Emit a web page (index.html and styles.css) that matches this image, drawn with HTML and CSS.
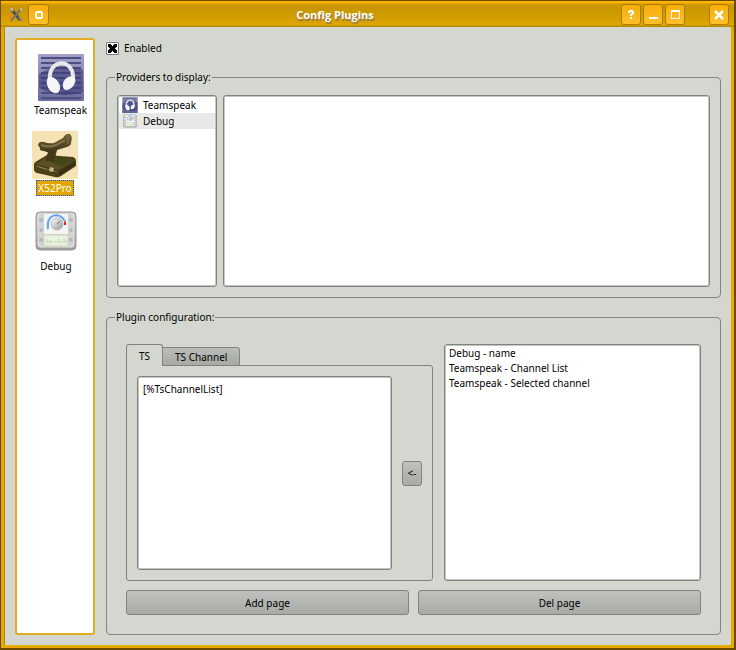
FILE: index.html
```html
<!DOCTYPE html>
<html lang="en">
<head>
    <meta charset="UTF-8">
    <meta name="viewport" content="width=device-width, initial-scale=1.0">
    <title>Config Plugins</title>
    <link rel="stylesheet" href="styles.css">
</head>
<body>

<!-- Shared icons -->
<svg class="defs" width="0" height="0" aria-hidden="true">
    <defs>
        <linearGradient id="tsBg" x1="0" y1="0" x2="0" y2="1">
            <stop offset="0" stop-color="#a2a2c8"/>
            <stop offset="1" stop-color="#6a6b9e"/>
        </linearGradient>
        <linearGradient id="metal" x1="0" y1="0" x2="0" y2="1">
            <stop offset="0" stop-color="#c8c8c8"/>
            <stop offset="1" stop-color="#9a9a9a"/>
        </linearGradient>
        <linearGradient id="knob" x1="0" y1="0" x2="1" y2="1">
            <stop offset="0" stop-color="#ffffff"/>
            <stop offset="1" stop-color="#8e9496"/>
        </linearGradient>
        <linearGradient id="grip" x1="0" y1="0" x2="0" y2="1">
            <stop offset="0" stop-color="#71633a"/>
            <stop offset="1" stop-color="#42391a"/>
        </linearGradient>
    </defs>
    <symbol id="icon-teamspeak" viewBox="0 0 46 47">
        <rect width="46" height="47" rx="1" fill="url(#tsBg)"/>
        <path d="M3 4h40M3 9h40M3 14h40M3 19h40M3 24h40M3 29h40M3 34h40M3 39h40M3 44h40" stroke="#4c4d80" stroke-width="2"/>
        <path d="M1 20Q22 7 45 16V38Q24 46 1 34Z" fill="#3c3d78" opacity=".6"/>
        <path d="M12 27C9 4 37 3 35 26" fill="none" stroke="#e9e9ec" stroke-width="4"/>
        <path d="M11 23C17 22 23 29 22 35C21 41 14 40 11 35C8 30 8 25 11 23Z" fill="#f6f6f6"/>
        <path d="M35 23C29 21 24 27 25 33C26 38 33 36 36 31C38 27 38 24 35 23Z" fill="#f6f6f6"/>
    </symbol>
    <symbol id="icon-debug" viewBox="0 0 48 48">
        <rect x="4" y="5" width="40" height="38" rx="4" fill="url(#metal)" stroke="#999"/>
        <rect x="6" y="7" width="36" height="33" rx="2" fill="#d2d2d2" stroke="#e6e6e6"/>
        <g fill="#b5b8bb">
            <circle cx="9" cy="13" r="2"/><circle cx="9" cy="23" r="2"/><circle cx="9" cy="33" r="2"/>
            <circle cx="39" cy="13" r="2"/><circle cx="39" cy="23" r="2"/><circle cx="39" cy="33" r="2"/>
        </g>
        <rect x="12" y="7" width="24" height="20" fill="#f4f4f4"/>
        <path d="M16 22C14 7 27 4 33 14" fill="none" stroke="#5da4e8" stroke-width="2"/>
        <path d="M32 15l2-1v4h-2z" fill="#e02a20"/>
        <circle cx="25" cy="17" r="6" fill="url(#knob)" stroke="#b5babd"/>
        <path d="M25 17l3-3" stroke="#777"/>
        <rect x="12" y="28" width="24" height="11" fill="#e9f2df" stroke="#c9d5bd"/>
        <path d="M15 36v-4M17 36v-2M19 36v-3M22 36v-1M24 36v-2M27 36v-4M29 36v-2M32 36v-5M34 36v-3" stroke="#b9d3a7"/>
    </symbol>
</svg>

<div class="window">
    <header class="titlebar">
        <div class="titlebar-side">
            <svg class="app-icon" width="16" height="16" viewBox="0 0 16 16" aria-hidden="true">
                <path d="M3 5v7" stroke="#f47a18" stroke-width="2"/>
                <path d="M4 3l8 10" stroke="#4f4f4b" stroke-width="3"/>
                <path d="M13 2L3 14" stroke="#77746c" stroke-width="2"/>
                <path d="M12 2l2 1M3 1l2 3" stroke="#c5beb0" stroke-width="2"/>
                <path d="M11 10l3 4" stroke="#888476" stroke-width="2"/>
            </svg>
            <button type="button" class="title-button" aria-label="Window menu">
                <svg width="20" height="20" viewBox="0 0 20 20"><path d="M7 6h6v1h1v6h-1v1H7v-1H6V7h1zM8 8v4h4V8z" fill="#fff" fill-rule="evenodd"/></svg>
            </button>
        </div>
        <h1 class="title">Config Plugins</h1>
        <div class="titlebar-side titlebar-right">
            <button type="button" class="title-button" aria-label="Help">
                <svg width="20" height="20" viewBox="0 0 20 20"><path d="M7 7V6h1V5h4v1h1v3h-1v1h-1v1H9V9h1V8h1V7H9v1H7zM9 12h2v2H9z" fill="#fff"/></svg>
            </button>
            <button type="button" class="title-button" aria-label="Minimize">
                <svg width="20" height="20" viewBox="0 0 20 20"><path d="M6 12h9v2H6z" fill="#fff"/></svg>
            </button>
            <button type="button" class="title-button" aria-label="Maximize">
                <svg width="20" height="20" viewBox="0 0 20 20"><path d="M6 5h9v9H6zM7 7v6h7V7z" fill="#fff" fill-rule="evenodd"/></svg>
            </button>
            <button type="button" class="title-button close" aria-label="Close">
                <svg width="20" height="20" viewBox="0 0 20 20"><path d="M6 6l8 8M14 6l-8 8" stroke="#fff" stroke-width="2.5"/></svg>
            </button>
        </div>
    </header>

    <div class="content">
        <nav class="sidebar">
            <button type="button" class="plugin">
                <svg width="46" height="48" viewBox="0 0 46 48" aria-hidden="true"><use href="#icon-teamspeak" y="1" width="46" height="47"/></svg>
                <span class="plugin-name">Teamspeak</span>
            </button>
            <button type="button" class="plugin selected">
                <svg width="46" height="48" viewBox="0 0 46 48" aria-hidden="true">
                    <rect width="46" height="48" fill="#f5e3b5"/>
                    <path d="M2 34Q2 31 5 30L15 24L41 26Q44 27 44 30V35L29 45Q26 47 23 46L5 42Q2 41 2 38Z" fill="#4a4018"/>
                    <path d="M4 33L16 26L42 29L27 39Z" fill="#5c5126"/>
                    <path d="M19 31L27 26L41 29L29 36Z" fill="#414716"/>
                    <path d="M27 40L43 31V34L27 45Z" fill="#382f12"/>
                    <path d="M4 35L25 41" stroke="#7c6f42" stroke-width="1"/>
                    <path d="M13 30L17 18L25 19L22 31Z" fill="#42391a"/>
                    <path d="M6 14Q7 10 12 11Q17 13 22 12L31 7Q34 2 38 3Q41 6 39 11Q40 14 35 16L25 19Q18 23 12 20Q7 20 8 17Z" fill="url(#grip)"/>
                    <path d="M9 14Q17 17 24 14L33 9" fill="none" stroke="#807248" stroke-width="2"/>
                    <path d="M36 4v9" stroke="#867950"/>
                    <path d="M18 36l4 1l-1 4l-4-1z" fill="#c3b684"/>
                    <path d="M7 36l7 2" stroke="#8e8051"/>
                </svg>
                <span class="plugin-name">X52Pro</span>
            </button>
            <button type="button" class="plugin">
                <svg width="48" height="48" viewBox="0 0 48 48" aria-hidden="true"><use href="#icon-debug" y="-2" width="48" height="48"/></svg>
                <span class="plugin-name">Debug</span>
            </button>
        </nav>

        <main class="settings">
            <label class="enabled">
                <input type="checkbox" class="check" checked>
                Enabled
            </label>

            <fieldset class="group providers">
                <legend>Providers to display:</legend>
                <div class="group-body">
                    <ul class="box provider-list">
                        <li><svg width="16" height="16" aria-hidden="true"><use href="#icon-teamspeak"/></svg>Teamspeak</li>
                        <li class="current"><svg width="16" height="16" aria-hidden="true"><use href="#icon-debug"/></svg>Debug</li>
                    </ul>
                    <div class="box provider-view"></div>
                </div>
            </fieldset>

            <fieldset class="group configuration">
                <legend>Plugin configuration:</legend>
                <div class="group-body">
                    <div class="editor-row">
                        <div class="tabs">
                            <div class="tab-bar" role="tablist">
                                <button type="button" class="tab active" role="tab" aria-selected="true">TS</button>
                                <button type="button" class="tab" role="tab" aria-selected="false">TS Channel</button>
                            </div>
                            <div class="pane" role="tabpanel">
                                <textarea class="box page-text" aria-label="Page content" spellcheck="false">[%TsChannelList]</textarea>
                                <button type="button" class="button insert" aria-label="Insert">&lt;-</button>
                            </div>
                        </div>
                        <select class="box variables" size="8" aria-label="Variables">
                            <option>Debug - name</option>
                            <option>Teamspeak - Channel List</option>
                            <option>Teamspeak - Selected channel</option>
                        </select>
                    </div>
                    <div class="actions">
                        <button type="button" class="button">Add page</button>
                        <button type="button" class="button">Del page</button>
                    </div>
                </div>
            </fieldset>
        </main>
    </div>
</div>

</body>
</html>
```
FILE: styles.css
```css
* {
    box-sizing: border-box;
}
body {
    margin: 0;
    background: #5c4306;
    color: #000;
    font-family: "Noto Sans", "Open Sans", sans-serif;
    font-size: 10px;
    line-height: 16px;
}
button, textarea, select, option {
    font: inherit;
    color: inherit;
}
.defs {
    display: block;
    height: 0;
}
.window {
    display: flex;
    flex-direction: column;
    min-height: 100vh;
    background: #d4d7d0;
    border: 1px solid #6c4b00;
    border-right: 2px solid #6c4b00;
    border-bottom: 2px solid #6c4b00;
}

/* Title bar */
.titlebar {
    display: flex;
    align-items: center;
    height: 26px;
    padding: 1px 5px 0 7px;
    background: linear-gradient(#ffb50a 0, #ffb50a 1px, #c99700 4px, #c99700 9px, #dfa600 24px, #b88a00 25px);
}
.titlebar-side {
    display: flex;
    align-items: center;
    gap: 4px;
}
.titlebar-right {
    gap: 2px;
}
.title {
    flex: 1;
    margin: 0;
    color: #fff;
    font-family: "Open Sans", sans-serif;
    font-size: 11px;
    font-weight: 700;
    line-height: 20px;
    text-align: center;
    text-shadow: 1px 2px 1px #8f7550;
}
.title-button {
    display: flex;
    align-items: center;
    justify-content: center;
    width: 21px;
    height: 21px;
    padding: 0;
    border: 1px solid #ab7b00;
    border-radius: 3px;
    background: linear-gradient(#f4ae0b, #ffc02c);
}
.titlebar-right .title-button {
    width: 20px;
}
.title-button svg {
    flex: none;
}
.title-button.close {
    margin-left: 22px;
}

/* Window body */
.content {
    display: flex;
    flex: 1;
    gap: 11px;
    padding: 11px 10px 10px 11px;
    border: solid #e6aa00;
    border-width: 0 3px 3px 3px;
    box-shadow: inset 1px 0 #b88a00;
}
.sidebar {
    display: flex;
    flex-direction: column;
    align-items: flex-start;
    gap: 13px;
    width: 80px;
    padding: 13px 4px 0 15px;
    background: #fff;
    border: 2px solid #e2ad20;
    border-radius: 3px;
}
.plugin {
    display: flex;
    flex-direction: column;
    align-items: center;
    padding: 0;
    border: 0;
    background: none;
}
.plugin-name {
    margin-top: 1px;
    padding: 0 2px;
}
.plugin.selected .plugin-name {
    outline: 1px dotted #1c4cd8;
    outline-offset: -1px;
    background: #dfa600;
    color: #fff;
}

.settings {
    display: flex;
    flex: 1;
    flex-direction: column;
    gap: 11px;
    min-width: 0;
}
.enabled {
    display: flex;
    align-items: center;
    align-self: flex-start;
    gap: 5px;
    height: 20px;
}
.check {
    appearance: none;
    width: 13px;
    height: 13px;
    margin: 0;
    border: 1px solid #777b75;
    border-radius: 1px;
    background: #fff;
}
.check:checked {
    background:
        linear-gradient(45deg, transparent 35%, #000 35%, #000 65%, transparent 65%) center / 9px 9px no-repeat,
        linear-gradient(135deg, transparent 35%, #000 35%, #000 65%, transparent 65%) center / 9px 9px no-repeat,
        #fff;
}

/* Framed groups */
.group {
    display: flex;
    flex-direction: column;
    min-width: 0;
    margin: 0;
    padding: 0;
    border: 1px solid #80847e;
    border-radius: 4px;
}
.group legend {
    margin-left: 8px;
    padding: 0 1px;
}
.group-body {
    display: flex;
    flex: 1;
}
.box {
    margin: 0;
    border: 1px solid #80847e;
    border-radius: 3px;
    outline: 0;
    background: #fff;
    box-shadow: inset 0 0 0 1px #c4c6c2;
}
.providers {
    flex: 229;
}
.providers .group-body {
    gap: 6px;
    padding: 10px;
}
.provider-list {
    flex: none;
    width: 100px;
    padding: 1px;
    list-style: none;
}
.provider-list li {
    display: flex;
    gap: 5px;
    height: 16px;
    padding-left: 3px;
}
.provider-list .current {
    background: #e8e8e8;
}
.provider-view {
    flex: 1;
}
.configuration {
    flex: 326;
}
.configuration .group-body {
    flex-direction: column;
    gap: 9px;
    padding: 19px;
}
.editor-row {
    display: flex;
    flex: 1;
    gap: 11px;
}
.tabs {
    display: flex;
    flex: 1 1 52px;
    flex-direction: column;
    min-width: 0;
}
.tab-bar {
    display: flex;
    align-items: flex-end;
    z-index: 1;
    margin-bottom: -1px;
}
.tab {
    height: 19px;
    padding: 0 12px;
    border: 1px solid #80847e;
    border-left: 0;
    border-radius: 0 3px 0 3px;
    background: linear-gradient(#bbbeb8, #a6a9a4);
    line-height: 16px;
}
.tab.active {
    height: 22px;
    border-left: 1px solid #80847e;
    border-bottom: 0;
    border-radius: 3px 3px 0 0;
    background: #d4d7d0;
}
.pane {
    display: flex;
    flex: 1;
    align-items: center;
    gap: 10px;
    padding: 10px;
    border: 1px solid #80847e;
    border-radius: 0 3px 3px 3px;
}
.page-text {
    align-self: stretch;
    flex: 1;
    min-width: 0;
    padding: 4px 5px;
    resize: none;
}
.variables {
    flex: 1 1 0;
    min-width: 0;
    padding: 1px 0;
    overflow: auto;
}
.variables option {
    min-height: 15px;
    padding: 0 4px;
    line-height: 15px;
}
.button {
    height: 25px;
    padding: 0;
    border: 1px solid #80847e;
    border-radius: 3px;
    background: linear-gradient(#bfc1bc, #a8aaa6);
}
.insert {
    flex: none;
    width: 20px;
}
.actions {
    display: flex;
    gap: 9px;
}
.actions .button {
    flex: 1;
}
```
